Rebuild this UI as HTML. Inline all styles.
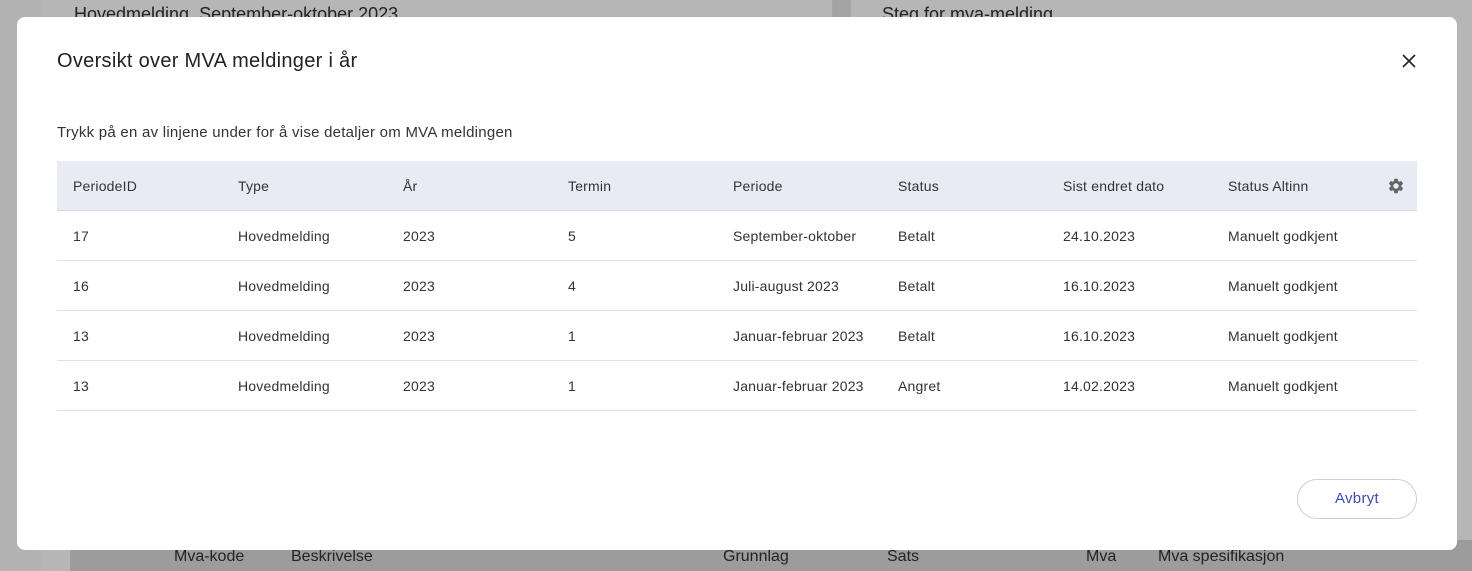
<!DOCTYPE html>
<html><head><meta charset="utf-8"><style>
body{margin:0;width:1472px;height:571px;overflow:hidden;background:#a3a3a3;font-family:"Liberation Sans",sans-serif;position:relative}
.bg1{position:absolute;left:0;top:0;width:42px;height:571px;background:#b3b3b3}
.bg2{position:absolute;left:42px;top:0;width:790px;height:571px;background:#b6b6b6;border-right:1px solid #a5a5a5}
.bg3{position:absolute;left:850px;top:0;width:622px;height:571px;background:#b6b6b6;border-left:1px solid #a5a5a5}
.bot{position:absolute;left:70px;top:540px;width:1402px;height:31px;background:#9c9c9c}
.t{position:absolute;color:#222;font-size:16px}
.modal{position:absolute;left:17px;top:17px;width:1440px;height:533px;background:#fff;border-radius:8px}
h1{position:absolute;left:40px;top:33px;margin:0;font-weight:normal;font-size:20px;color:#222;letter-spacing:.3px}
.x{position:absolute;left:1382px;top:34px}
.sub{position:absolute;left:40px;top:107px;font-size:15px;color:#333;letter-spacing:.25px}
table{position:absolute;left:40px;top:144px;width:1360px;border-collapse:collapse;font-size:14px;color:#333;table-layout:fixed;letter-spacing:.2px}
th{background:#e8ebf3;font-weight:normal;text-align:left;height:49px;border-bottom:1px solid #d6d9e0;padding:0 0 0 16px}
td{height:49px;border-bottom:1px solid #e2e2e2;padding:0 0 0 16px;white-space:nowrap;overflow:hidden}
td.p{overflow:hidden;text-overflow:clip;padding-right:30px}
.btn{position:absolute;left:1280px;top:462px;width:118px;height:38px;border:1px solid #cfcfcf;border-radius:20px;color:#3a4cb0;font-size:15px;text-align:center;line-height:38px;letter-spacing:.3px}
</style></head><body>
<div class="bg1"></div><div class="bg2"></div><div class="bg3"></div><div class="bot"></div>
<div class="t" style="left:74px;top:4px;font-size:18px">Hovedmelding, September-oktober 2023</div>
<div class="t" style="left:882px;top:4px;font-size:18px">Steg for mva-melding</div>
<div class="t" style="left:174px;top:548px">Mva-kode</div>
<div class="t" style="left:291px;top:548px">Beskrivelse</div>
<div class="t" style="left:723px;top:548px">Grunnlag</div>
<div class="t" style="left:887px;top:548px">Sats</div>
<div class="t" style="left:1086px;top:548px">Mva</div>
<div class="t" style="left:1158px;top:548px">Mva spesifikasjon</div>
<div class="modal">
<h1>Oversikt over MVA meldinger i år</h1>
<svg class="x" width="20" height="20" viewBox="0 0 20 20"><path d="M4 4L16 16M16 4L4 16" stroke="#222" stroke-width="1.6"/></svg>
<div class="sub">Trykk på en av linjene under for å vise detaljer om MVA meldingen</div>
<table>
<colgroup><col style="width:165px"><col style="width:165px"><col style="width:165px"><col style="width:165px"><col style="width:165px"><col style="width:165px"><col style="width:165px"><col></colgroup>
<tr><th>PeriodeID</th><th>Type</th><th>År</th><th>Termin</th><th>Periode</th><th>Status</th><th>Sist endret dato</th><th style="position:relative">Status Altinn<svg style="position:absolute;right:12px;top:16px" width="18" height="18" viewBox="0 0 24 24"><path fill="#666" d="M19.14 12.94c.04-.3.06-.61.06-.94s-.02-.64-.07-.94l2.03-1.580a.49.49 0 0 0 .12-.61l-1.92-3.32a.49.49 0 0 0-.59-.22l-2.39.96a7 7 0 0 0-1.620-.94l-.36-2.540a.48.48 0 0 0-.48-.41h-3.84a.47.47 0 0 0-.47.41l-.36 2.54c-.59.24-1.13.57-1.62.94l-2.39-.96a.48.48 0 0 0-.59.22L2.74 8.87a.47.47 0 0 0 .12.61l2.03 1.58c-.05.3-.09.63-.09.94s.02.64.07.94l-2.03 1.58a.49.49 0 0 0-.12.61l1.92 3.32c.12.22.37.29.59.22l2.39-.96c.5.38 1.03.7 1.62.94l.36 2.54c.05.24.24.41.48.41h3.84c.24 0 .44-.17.47-.41l.36-2.54c.59-.24 1.13-.56 1.62-.94l2.39.96c.22.08.47 0 .59-.22l1.92-3.32a.47.47 0 0 0-.12-.61zM12 15.6A3.6 3.6 0 1 1 12 8.4a3.6 3.6 0 0 1 0 7.2z"/></svg></th></tr>
<tr><td>17</td><td>Hovedmelding</td><td>2023</td><td>5</td><td class="p">September-oktober</td><td>Betalt</td><td>24.10.2023</td><td>Manuelt godkjent</td></tr>
<tr><td>16</td><td>Hovedmelding</td><td>2023</td><td>4</td><td class="p">Juli-august 2023</td><td>Betalt</td><td>16.10.2023</td><td>Manuelt godkjent</td></tr>
<tr><td>13</td><td>Hovedmelding</td><td>2023</td><td>1</td><td class="p">Januar-februar 2023</td><td>Betalt</td><td>16.10.2023</td><td>Manuelt godkjent</td></tr>
<tr><td>13</td><td>Hovedmelding</td><td>2023</td><td>1</td><td class="p">Januar-februar 2023</td><td>Angret</td><td>14.02.2023</td><td>Manuelt godkjent</td></tr>
</table>
<div class="btn">Avbryt</div>
</div>
</body></html>
